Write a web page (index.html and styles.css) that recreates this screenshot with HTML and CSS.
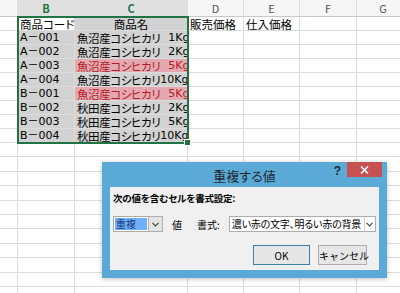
FILE: index.html
```html
<!DOCTYPE html>
<html>

<head>
    <link rel="stylesheet" href="styles.css">
</head>

<body>

    <div class="sheet">
        <table class="grid">
            <colgroup>
                <col class="col-a">
                <col class="col-b">
                <col class="col-c">
                <col class="col-d">
                <col class="col-e">
                <col class="col-f">
                <col class="col-g">
            </colgroup>
            <tr class="head">
                <th></th>
                <th class="on">B</th>
                <th class="on">C</th>
                <th>D</th>
                <th>E</th>
                <th>F</th>
                <th>G</th>
            </tr>
            <tr>
                <td></td>
                <td class="active">商品コード</td>
                <td class="sel center">商品名</td>
                <td>販売価格</td>
                <td>仕入価格</td>
                <td></td>
                <td></td>
            </tr>
            <tr>
                <td></td>
                <td class="sel code">A－001</td>
                <td class="sel name">魚沼産コシヒカリ<span class="qty">1Kg</span></td>
                <td></td><td></td><td></td><td></td>
            </tr>
            <tr>
                <td></td>
                <td class="sel code">A－002</td>
                <td class="sel name">魚沼産コシヒカリ<span class="qty">2Kg</span></td>
                <td></td><td></td><td></td><td></td>
            </tr>
            <tr>
                <td></td>
                <td class="sel code">A－003</td>
                <td class="sel name dup">魚沼産コシヒカリ<span class="qty">5Kg</span></td>
                <td></td><td></td><td></td><td></td>
            </tr>
            <tr>
                <td></td>
                <td class="sel code">A－004</td>
                <td class="sel name">魚沼産コシヒカリ<span class="qty tight">10Kg</span></td>
                <td></td><td></td><td></td><td></td>
            </tr>
            <tr>
                <td></td>
                <td class="sel code">B－001</td>
                <td class="sel name dup">魚沼産コシヒカリ<span class="qty">5Kg</span></td>
                <td></td><td></td><td></td><td></td>
            </tr>
            <tr>
                <td></td>
                <td class="sel code">B－002</td>
                <td class="sel name">秋田産コシヒカリ<span class="qty">2Kg</span></td>
                <td></td><td></td><td></td><td></td>
            </tr>
            <tr>
                <td></td>
                <td class="sel code">B－003</td>
                <td class="sel name">秋田産コシヒカリ<span class="qty">5Kg</span></td>
                <td></td><td></td><td></td><td></td>
            </tr>
            <tr>
                <td></td>
                <td class="sel code">B－004</td>
                <td class="sel name">秋田産コシヒカリ<span class="qty tight">10Kg</span></td>
                <td></td><td></td><td></td><td></td>
            </tr>
            <tr class="blank"><td></td><td></td><td></td><td></td><td></td><td></td><td></td></tr>
            <tr class="blank"><td></td><td></td><td></td><td></td><td></td><td></td><td></td></tr>
            <tr class="blank"><td></td><td></td><td></td><td></td><td></td><td></td><td></td></tr>
            <tr class="blank"><td></td><td></td><td></td><td></td><td></td><td></td><td></td></tr>
            <tr class="blank"><td></td><td></td><td></td><td></td><td></td><td></td><td></td></tr>
            <tr class="blank"><td></td><td></td><td></td><td></td><td></td><td></td><td></td></tr>
            <tr class="blank"><td></td><td></td><td></td><td></td><td></td><td></td><td></td></tr>
            <tr class="blank"><td></td><td></td><td></td><td></td><td></td><td></td><td></td></tr>
            <tr class="blank"><td></td><td></td><td></td><td></td><td></td><td></td><td></td></tr>
            <tr class="blank"><td></td><td></td><td></td><td></td><td></td><td></td><td></td></tr>
            <tr class="blank"><td></td><td></td><td></td><td></td><td></td><td></td><td></td></tr>
        </table>

        <!-- selected range B1:C9 -->
        <div class="selection"><span class="handle"></span></div>

        <!-- Dialog -->
        <div class="dialog">
            <div class="dlg-title">
                <span class="dlg-caption">重複する値</span>
                <span class="dlg-help">?</span>
                <span class="dlg-close">
                    <svg width="9" height="8" viewBox="0 0 9 8">
                        <path d="M1 0.5 L8 7.5 M8 0.5 L1 7.5" stroke="#fff" stroke-width="1.6" fill="none" />
                    </svg>
                </span>
            </div>
            <div class="dlg-body">
                <p class="dlg-label">次の値を含むセルを書式設定:</p>
                <div class="dlg-row">
                    <div class="combo combo-small">
                        <span class="combo-value"><span class="pick">重複</span></span>
                        <span class="combo-arrow">
                            <svg width="7" height="5" viewBox="0 0 7 5">
                                <path d="M0.5 0.8 L3.5 3.8 L6.5 0.8" stroke="#444" stroke-width="1.2" fill="none" />
                            </svg>
                        </span>
                    </div>
                    <span class="word">値</span>
                    <span class="word word-fmt">書式:</span>
                    <div class="combo combo-wide">
                        <span class="combo-value">濃い赤の文字、明るい赤の背景</span>
                        <span class="combo-arrow">
                            <svg width="7" height="5" viewBox="0 0 7 5">
                                <path d="M0.5 0.8 L3.5 3.8 L6.5 0.8" stroke="#444" stroke-width="1.2" fill="none" />
                            </svg>
                        </span>
                    </div>
                </div>
                <div class="dlg-buttons">
                    <button class="btn btn-ok">OK</button>
                    <button class="btn btn-cancel">キャンセル</button>
                </div>
            </div>
        </div>
    </div>

</body>

</html>
```

FILE: styles.css
```css
body {
    margin: 0;
    background-color: white;
    font-family: "Noto Sans CJK JP", "Noto Sans", sans-serif;
    font-feature-settings: "palt";
}

.sheet {
    position: relative;
    width: 400px;
    height: 293px;
    overflow: hidden;
}

/* Grid */
.grid {
    border-collapse: separate;
    border-spacing: 0;
    table-layout: fixed;
    width: 410px;
}

.col-a { width: 18px; }
.col-b { width: 57px; }
.col-c { width: 113px; }
.col-d { width: 56px; }
.col-e { width: 56px; }
.col-f { width: 57px; }
.col-g { width: 53px; }

.grid th,
.grid td {
    box-sizing: border-box;
    border-right: 1px solid #dcdcdc;
    border-bottom: 1px solid #dcdcdc;
    padding: 0 2px;
    white-space: nowrap;
    overflow: visible;
}

.head th {
    height: 17px;
    font-size: 11px;
    font-weight: normal;
    color: #555;
    background-color: #f6f6f6;
    border-bottom-color: #c8c8c8;
    border-right-color: #dedede;
    text-align: center;
    line-height: 15px;
}

.head th.on {
    background-color: #e0e0e0;
    color: #217346;
    font-weight: bold;
}

.grid td {
    height: 14px;
    font-size: 11.5px;
    line-height: 12px;
    color: #000;
    vertical-align: middle;
}

.grid tr.blank td {
    height: 14.4px;
}

.grid td.name {
    letter-spacing: -0.4px;
    overflow: hidden;
}

.grid td.code,
.qty {
    font-family: "DejaVu Sans", "Noto Sans CJK JP", sans-serif;
    font-size: 11px;
    letter-spacing: 0;
}

.qty {
    display: inline-block;
    vertical-align: top;
    line-height: 12px;
    margin-left: 8px;
}

.qty.tight {
    margin-left: 0;
}

.grid td.sel {
    background-color: #d2d2d2;
}

.grid td.active {
    background-color: white;
}

.grid td.center {
    text-align: center;
}

.grid td.dup {
    background-color: #e4a9b0;
    color: #b01c28;
}

.selection {
    position: absolute;
    left: 17px;
    top: 16px;
    width: 172px;
    height: 128px;
    box-sizing: border-box;
    border: 2px solid #217346;
}

.handle {
    position: absolute;
    right: -4px;
    bottom: -4px;
    width: 5px;
    height: 5px;
    background-color: #217346;
    border: 1px solid white;
}

/* Dialog styles */
.dialog {
    position: absolute;
    left: 102px;
    top: 162px;
    width: 285px;
    height: 116px;
    box-sizing: border-box;
    padding: 0 8px 8px;
    background-color: #5ba9d6;
    display: flex;
    flex-direction: column;
    box-shadow: 0 1px 5px rgba(0, 0, 0, 0.25);
}

.dlg-title {
    position: relative;
    height: 25px;
    display: flex;
    align-items: center;
    justify-content: center;
}

.dlg-caption {
    font-size: 13px;
    color: #1e2a33;
    padding-top: 2px;
}

.dlg-help {
    position: absolute;
    right: 38px;
    top: 2px;
    font-size: 12px;
    font-weight: bold;
    color: #1e2a33;
    font-family: "Liberation Sans", sans-serif;
}

.dlg-close {
    position: absolute;
    right: -3px;
    top: 0;
    width: 35px;
    height: 15px;
    background-color: #c75050;
    display: flex;
    align-items: center;
    justify-content: center;
}

.dlg-body {
    flex: 1;
    background-color: #f0f0f0;
    padding: 4px 12px 0 3px;
    font-size: 10px;
    color: #000;
    white-space: nowrap;
}

.dlg-label {
    margin: 0;
    font-size: 9.5px;
    letter-spacing: -0.2px;
    font-weight: bold;
    line-height: 14px;
}

.dlg-row {
    margin-top: 11px;
    display: flex;
    align-items: center;
    height: 16px;
}

.combo {
    height: 16px;
    box-sizing: border-box;
    display: flex;
    background-color: white;
    flex-shrink: 0;
}

.combo-small {
    width: 50px;
    border: none;
}

.combo-small .combo-value {
    width: 35px;
    border: 1px solid #acacac;
    border-right: none;
    box-sizing: border-box;
    padding: 1px;
}

.pick {
    display: block;
    height: 100%;
    background-color: #6fb0f8;
    color: #1b3c7a;
    line-height: 12px;
    padding-left: 1px;
}

.combo-small .combo-arrow {
    width: 15px;
    background-color: #e4e4e4;
    border: 1px solid #acacac;
}

.combo-wide {
    width: 147px;
    margin-left: 9px;
    border: 1px solid #abadb3;
}

.combo-wide .combo-value {
    flex: 1;
    padding-left: 2px;
    line-height: 14px;
    letter-spacing: -0.2px;
    overflow: hidden;
}

.combo-wide .combo-arrow {
    width: 11px;
    border-left: 1px solid #d2d2d2;
}

.combo-arrow {
    box-sizing: border-box;
    display: flex;
    align-items: center;
    justify-content: center;
}

.word {
    margin-left: 9px;
}

.word-fmt {
    margin-left: 15px;
}

.dlg-buttons {
    margin-top: 13px;
    display: flex;
    justify-content: flex-end;
    gap: 8px;
}

.btn {
    height: 20px;
    font-family: inherit;
    font-size: 10px;
    color: #000;
    background-color: #e6e6e6;
    border: 1px solid #adadad;
    padding: 0;
    white-space: nowrap;
}

.btn-ok {
    width: 57px;
    border-color: #3c7fb1;
}

.btn-cancel {
    width: 49px;
}
```
